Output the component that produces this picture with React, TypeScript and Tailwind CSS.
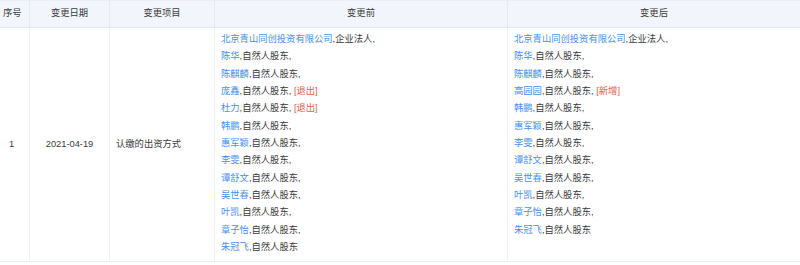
type Holder = { name: string; role: string; tag?: "退出" | "新增"; last?: boolean }

const before: Holder[] = [
  { name: "北京青山同创投资有限公司", role: "企业法人" },
  { name: "陈华", role: "自然人股东" },
  { name: "陈麒麟", role: "自然人股东" },
  { name: "庞鑫", role: "自然人股东", tag: "退出" },
  { name: "杜力", role: "自然人股东", tag: "退出" },
  { name: "韩鹏", role: "自然人股东" },
  { name: "惠军颖", role: "自然人股东" },
  { name: "李雯", role: "自然人股东" },
  { name: "谭舒文", role: "自然人股东" },
  { name: "吴世春", role: "自然人股东" },
  { name: "叶凯", role: "自然人股东" },
  { name: "章子怡", role: "自然人股东" },
  { name: "朱冠飞", role: "自然人股东", last: true },
]

const after: Holder[] = [
  { name: "北京青山同创投资有限公司", role: "企业法人" },
  { name: "陈华", role: "自然人股东" },
  { name: "陈麒麟", role: "自然人股东" },
  { name: "高园园", role: "自然人股东", tag: "新增" },
  { name: "韩鹏", role: "自然人股东" },
  { name: "惠军颖", role: "自然人股东" },
  { name: "李雯", role: "自然人股东" },
  { name: "谭舒文", role: "自然人股东" },
  { name: "吴世春", role: "自然人股东" },
  { name: "叶凯", role: "自然人股东" },
  { name: "章子怡", role: "自然人股东" },
  { name: "朱冠飞", role: "自然人股东", last: true },
]

function HolderList({ items }: { items: Holder[] }) {
  return (
    <div className="flex flex-col">
      {items.map((h, i) => (
        <div key={i} className="whitespace-nowrap">
          <a href="#" className="text-[#4590f2]">
            {h.name}
          </a>
          ,{h.role}
          {h.last ? "" : ","}
          {h.tag && <span className="text-[#f05a48]"> [{h.tag}]</span>}
        </div>
      ))}
    </div>
  )
}

export default function App() {
  return (
    <div className="w-[800px] h-[265px] bg-white text-[9.3px] leading-[17.33px] text-[#3a3a3a] font-['Liberation_Sans','Noto_Sans_CJK_SC',sans-serif]">
      <div className="grid grid-cols-[30px_80px_105px_293px_292px] border-t border-b border-[#e8eef6]">
        <div className="h-[27px] flex items-center pl-[3px] bg-[#f2f6fc] border-r border-b border-[#e4ebf4]">序号</div>
        <div className="h-[27px] flex items-center justify-center bg-[#f2f6fc] border-r border-b border-[#e4ebf4]">变更日期</div>
        <div className="h-[27px] flex items-center justify-center bg-[#f2f6fc] border-r border-b border-[#e4ebf4]">变更项目</div>
        <div className="h-[27px] flex items-center justify-center bg-[#f2f6fc] border-r border-b border-[#e4ebf4]">变更前</div>
        <div className="h-[27px] flex items-center justify-center bg-[#f2f6fc] border-b border-[#e4ebf4]">变更后</div>

        <div className="flex items-center pl-[9px] border-r border-[#edf1f7]">1</div>
        <div className="flex items-center justify-center border-r border-[#edf1f7]">2021-04-19</div>
        <div className="flex items-center pl-[6px] border-r border-[#edf1f7]">认缴的出资方式</div>
        <div className="pl-[6px] pt-[3px] pb-[5px] border-r border-[#edf1f7]">
          <HolderList items={before} />
        </div>
        <div className="pl-[6px] pt-[3px] pb-[5px]">
          <HolderList items={after} />
        </div>
      </div>
    </div>
  )
}
